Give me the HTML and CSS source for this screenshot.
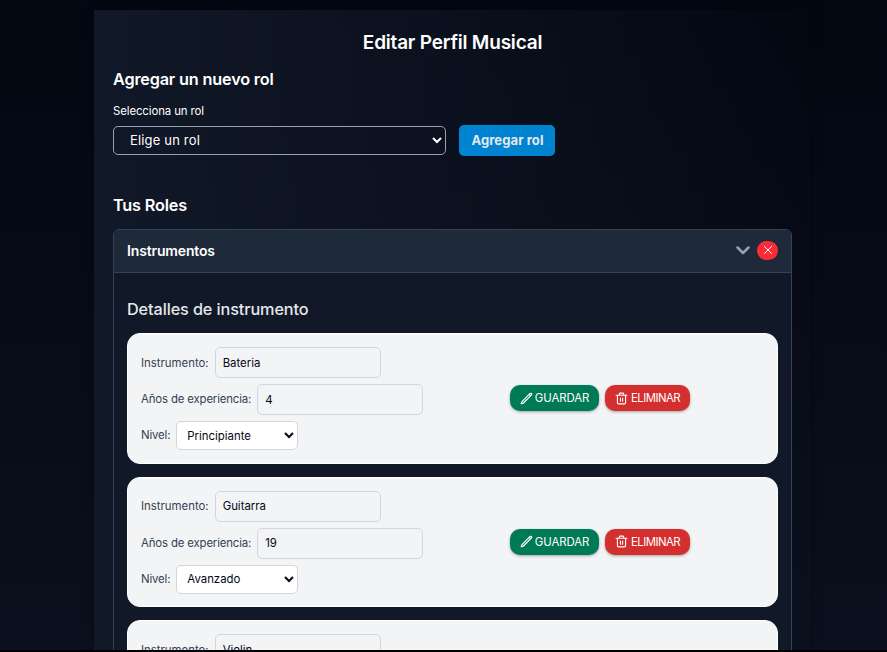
FILE: index.html
```html
<!DOCTYPE html>
<html lang="es">
<head>
<meta charset="utf-8">
<title>Editar Perfil Musical</title>
<link rel="stylesheet" href="styles.css">
</head>
<body>
<svg width="0" height="0" class="defs" aria-hidden="true">
  <symbol id="pencil" viewBox="0 0 24 24"><path d="m16.862 4.487 1.687-1.688a1.875 1.875 0 1 1 2.652 2.652L6.832 19.82a4.5 4.5 0 0 1-1.897 1.13l-2.685.8.8-2.685a4.5 4.5 0 0 1 1.13-1.897L16.863 4.487Zm0 0L19.5 7.125"/></symbol>
  <symbol id="trash" viewBox="0 0 24 24"><path d="M2 6h20M4.500 6v14a2 2 0 0 0 2 2h11a2 2 0 0 0 2-2V6M8 6V3.500a1.500 1.500 0 0 1 1.500-1.500h5A1.500 1.500 0 0 1 16 3.500V6M10 11v6M14 11v6"/></symbol>
</svg>
<main class="panel">
  <h1>Editar Perfil Musical</h1>
  <section class="add">
    <h2>Agregar un nuevo rol</h2>
    <label class="add-label" for="rol">Selecciona un rol</label>
    <div class="add-row">
      <select id="rol" class="role-select"><option>Elige un rol</option></select>
      <button class="add-btn">Agregar rol</button>
    </div>
  </section>
  <h2 class="roles-title">Tus Roles</h2>
  <section class="box">
    <header class="box-head">
      <h3>Instrumentos</h3>
      <svg class="chev" viewBox="0 0 14 9"><path d="M1.500 1.500 7 7l5.500-5.500"/></svg>
      <button class="close" aria-label="Quitar"><svg viewBox="0 0 8 8"><path d="M.5.500l7 7m0-7l-7 7"/></svg></button>
    </header>
    <div class="box-body">
      <h4>Detalles de instrumento</h4>
      <article class="card">
        <div class="fields">
          <label class="field"><span>Instrumento:</span><input value="Bateria"></label>
          <label class="field years"><span>Años de experiencia:</span><input value="4"></label>
          <label class="field level"><span>Nivel:</span><select><option>Principiante</option></select></label>
        </div>
        <div class="actions">
          <button class="btn save"><svg><use href="#pencil"/></svg>GUARDAR</button>
          <button class="btn del"><svg><use href="#trash"/></svg>ELIMINAR</button>
        </div>
      </article>
      <article class="card">
        <div class="fields">
          <label class="field"><span>Instrumento:</span><input value="Guitarra"></label>
          <label class="field years"><span>Años de experiencia:</span><input value="19"></label>
          <label class="field level"><span>Nivel:</span><select><option>Avanzado</option></select></label>
        </div>
        <div class="actions">
          <button class="btn save"><svg><use href="#pencil"/></svg>GUARDAR</button>
          <button class="btn del"><svg><use href="#trash"/></svg>ELIMINAR</button>
        </div>
      </article>
      <article class="card">
        <div class="fields">
          <label class="field"><span>Instrumento:</span><input value="Violin"></label>
        </div>
      </article>
    </div>
  </section>
</main>
</body>
</html>
```

FILE: styles.css
```css
* { box-sizing: border-box; margin: 0; }
html { background: #000; height: 100%; overflow: hidden; }
body {
  height: 650px;
  overflow: hidden;
  padding-top: 10px;
  background: linear-gradient(to bottom, #030712, #0a101d);
  font-family: Inter, "Liberation Sans", sans-serif;
  font-size: 13px;
  color: #fff;
}
.defs { position: absolute; }
button, input, select { font: inherit; }
svg { fill: none; stroke: currentColor; stroke-linecap: round; stroke-linejoin: round; }
.panel {
  width: 717px;
  height: 640px;
  overflow: hidden;
  margin-left: 94px;
  padding: 20px 19px 0;
  background: linear-gradient(to right, #111827, rgba(17, 24, 39, 0));
  box-shadow: 0 0 9px -2px rgba(0, 0, 0, .5);
}
h1 { font-size: 19px; line-height: 26px; font-weight: 600; text-align: center; letter-spacing: -.2px; }
h2 { font-size: 16.25px; line-height: 23px; font-weight: 600; letter-spacing: -.18px; }
.add h2 { margin-top: 12px; }
.add-label { display: block; margin-top: 12px; font-size: 11.4px; line-height: 16px; letter-spacing: -.1px; }
.add-row { display: flex; align-items: center; gap: 13px; margin-top: 6px; }
.role-select {
  width: 333px; height: 29px; padding: 0 0 1px 12px;
  border: 1px solid #99a1af; border-radius: 5px;
  background: transparent; color: #fff; font-size: 13px; letter-spacing: .17px;
}
.add-btn {
  width: 96px; height: 31px; border: 0; border-radius: 5px; padding: 0 0 1px 1px;
  background: #0084d1; color: #e5e7eb; font-size: 13px; font-weight: 700; letter-spacing: .1px;
}
.roles-title { margin-top: 38px; }
.box { margin-top: 12px; height: 700px; border: 1px solid #364153; border-radius: 6px; overflow: hidden; background: #111827; }
.box-head {
  display: flex; align-items: center; height: 43px; padding: 0 13px 2px;
  background: #1e2939; border-bottom: 1px solid #364153;
}
h3 { flex: 1; font-size: 14px; font-weight: 600; letter-spacing: -.15px; }
.chev { width: 14px; height: 9px; color: #99a1af; stroke-width: 2.5; margin-right: 7px; }
.close {
  display: flex; align-items: center; justify-content: center;
  width: 21px; height: 19px; padding: 0 0 1px; border: 0; border-radius: 10px;
  background: #fb2c36; color: #fff;
}
.close svg { width: 8px; height: 8px; stroke-width: 1; }
.box-body { padding: 24px 13px; }
h4 { font-size: 16.25px; line-height: 24px; font-weight: 500; color: #e5e7eb; letter-spacing: -.11px; }
.card {
  display: flex; height: 130.500px; margin-top: 13px; padding: 13px;
  border: 1px solid #fff; border-radius: 13px; background: #f3f4f6; color: #364153;
}
h4 + .card { margin-top: 12px; }
.fields { width: 369px; display: flex; flex-direction: column; gap: 6px; }
.field { display: flex; align-items: center; gap: 6px; font-size: 11.4px; }
.field input {
  width: 166px; height: 31px; padding: 0 7px; color: #030712;
  border: 1px solid #d1d5dc; border-radius: 5px; background: transparent;
}
.years span, .level span { padding-bottom: 1px; letter-spacing: -.15px; }
.level select {
  width: 122px; height: 29px; padding: 0 0 0 6px; color: #030712;
  border: 1px solid #d1d5dc; border-radius: 5px; background: #fff;
}
.actions { display: flex; align-items: center; gap: 6px; }
.btn {
  display: flex; align-items: center; justify-content: center; gap: 2px;
  height: 26px; padding: 0; border: 0; border-radius: 10px; color: #fff; font-size: 11.4px;
  box-shadow: 0 1px 3px rgba(0, 0, 0, .35);
}
.btn svg { width: 13px; height: 13px; stroke-width: 2.1; }
.save { width: 89px; background: #007a55; letter-spacing: -.1px; }
.del { width: 85px; background: #d32f2f; letter-spacing: -.55px; gap: 3px; }
```
